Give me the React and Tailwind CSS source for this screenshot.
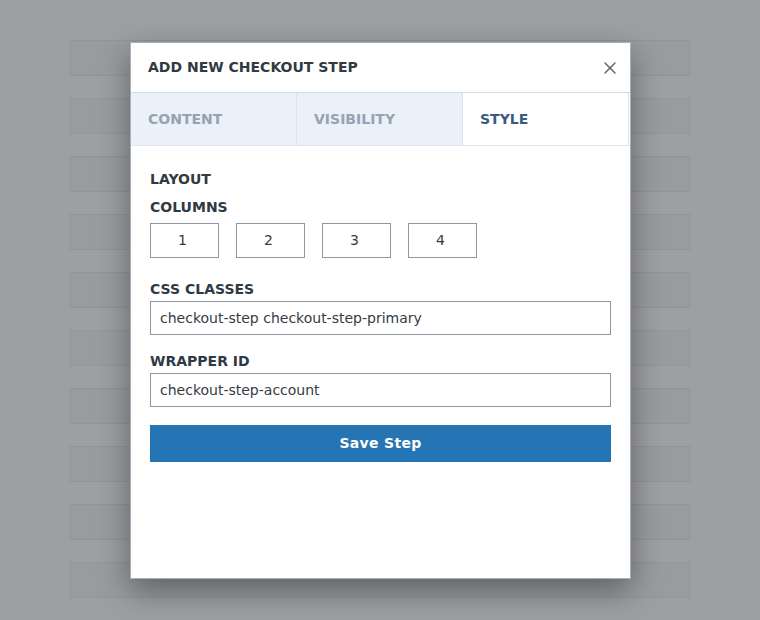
import { X } from 'lucide-react'

const ROWS = Array.from({ length: 10 })

const TABS = [
  { id: 'content', label: 'CONTENT' },
  { id: 'visibility', label: 'VISIBILITY' },
  { id: 'style', label: 'STYLE' },
]

function Field({ label, value }) {
  return (
    <div>
      <div className="text-[14px] font-bold text-[#2f3a45] leading-[17px] mb-[3px]">{label}</div>
      <div className="h-[34px] border border-[#8f98a2] px-[9px] flex items-center text-[14px] text-[#343c45]">
        {value}
      </div>
    </div>
  )
}

export default function App() {
  const active = 'style'
  return (
    <div className="relative w-[760px] h-[620px] overflow-hidden bg-[#9e9fa1] font-['DejaVu_Sans',sans-serif]">
      <div className="flex flex-col gap-[22px] pt-10 px-[70px]">
        {ROWS.map((_, i) => (
          <div key={i} className="h-9 bg-[#999c9f] border border-[#929599]" />
        ))}
      </div>

      <div className="absolute left-[130px] top-[42px] w-[501px] h-[537px] bg-white border border-[#a7b1bc] shadow-[0_12px_30px_rgba(0,0,0,0.38)] flex flex-col">
        <div className="h-[50px] flex items-center justify-between pl-[17px] pr-[10px] border-b border-[#d3dce6]">
          <h2 className="text-[14px] font-bold text-[#2f3a45]">ADD NEW CHECKOUT STEP</h2>
          <X size={20} strokeWidth={1.8} className="text-[#5f6670]" />
        </div>

        <div className="flex h-[53px] border-b border-[#dde5ee] pr-[1px]">
          {TABS.map((t) => (
            <div
              key={t.id}
              className={`flex-1 flex items-center pl-[17px] pt-[1px] text-[14px] font-bold border-r border-[#dbe3ec] ${
                active === t.id ? 'bg-white text-[#3a5a80]' : 'bg-[#eaf1f8] text-[#95a3b3]'
              }`}
            >
              {t.label}
            </div>
          ))}
        </div>

        <div className="flex flex-col px-[19px] pt-[25px]">
          <div className="text-[14px] font-bold text-[#2f3a45] leading-[17px]">LAYOUT</div>
          <div className="text-[14px] font-bold text-[#2f3a45] leading-[17px] mt-[11px] mb-[7px]">COLUMNS</div>
          <div className="flex gap-[17px]">
            {[1, 2, 3, 4].map((n) => (
              <div key={n} className="w-[69px] h-[35px] border border-[#8f98a2] flex items-center justify-center pr-[4px] text-[14px] text-[#343c45]">
                {n}
              </div>
            ))}
          </div>
          <div className="mt-[23px]">
            <Field label="CSS CLASSES" value="checkout-step checkout-step-primary" />
          </div>
          <div className="mt-[18px]">
            <Field label="WRAPPER ID" value="checkout-step-account" />
          </div>
          <button className="mt-[18px] h-[37px] bg-[#2574b3] text-white text-[14px] font-bold tracking-[0.3px]">
            Save Step
          </button>
        </div>
      </div>
    </div>
  )
}
